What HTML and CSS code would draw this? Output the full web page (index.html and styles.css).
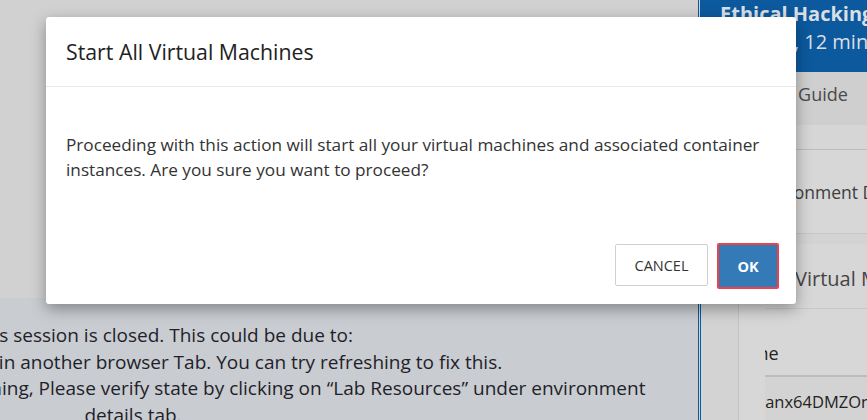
FILE: index.html
```html
<!DOCTYPE html>
<html lang="en">
<head>
<meta charset="utf-8">
<title>Start All Virtual Machines</title>
<link rel="stylesheet" href="styles.css">
</head>
<body>
<div class="page">
  <main class="main">
    <div class="stage"></div>
    <div class="notice">
      <p>The access session is closed. This could be due to:<br>1. The Lab is already open in another browser Tab. You can try refreshing to fix this.<br>2. If your Virtual Machines are still not running, Please verify state by clicking on “Lab Resources” under environment<br>details tab.</p>
    </div>
  </main>
  <aside class="side">
    <div class="side-hdr">
      <div class="course">Ethical Hacking</div>
      <div class="dur">1 hours, 12 mins</div>
    </div>
    <div class="tabs"><span class="tab">Lab Guide</span></div>
    <div class="band"></div>
    <div class="env">Environment Details</div>
    <div class="vmsec">
      <div class="card">
        <div class="card-title">Virtual Machines</div>
        <div class="tbl">
          <div class="th"><span class="th-txt">Machine</span></div>
          <div class="td"><span class="td-txt">Windowsanx64DMZOne</span></div>
        </div>
      </div>
    </div>
  </aside>

  <div class="overlay">
    <div class="modal" role="dialog">
      <div class="modal-hdr"><h4 class="modal-title">Start All Virtual Machines</h4></div>
      <div class="modal-body">
        <p>Proceeding with this action will start all your virtual machines and associated container<br>instances. Are you sure you want to proceed?</p>
      </div>
      <div class="modal-ftr">
        <button class="btn btn-cancel">CANCEL</button>
        <button class="btn btn-ok">OK</button>
      </div>
    </div>
  </div>
</div>
</body>
</html>
```

FILE: styles.css
```css
* { box-sizing: border-box; }
body {
  margin: 0;
  font-family: "Open Sans", "Noto Sans", sans-serif;
  background: #d1d1d1;
}
.page {
  position: relative;
  display: flex;
  width: 867px;
  height: 420px;
  overflow: hidden;
}
.main {
  flex: none;
  width: 698px;
  display: flex;
  flex-direction: column;
  overflow: hidden;
}
.stage {
  flex: none;
  height: 298px;
  background: #d1d1d1;
}
.notice {
  flex: 1;
  background: #c9ccd1;
  padding-top: 24px;
  color: #1f1f2a;
}
.notice p {
  margin: 0 0 0 -467px;
  width: 1200px;
  text-align: center;
  white-space: nowrap;
  font-size: 19px;
  line-height: 26.5px;
}

.side {
  flex: 1;
  display: flex;
  flex-direction: column;
  border-left: 3px double #0c599e;
  background: #d3d3d3;
  overflow: hidden;
  white-space: nowrap;
}
.side-hdr {
  flex: none;
  height: 72px;
  background: #0c599e;
  color: #dadfe5;
  padding: 0 0 0 19px;
  font-size: 20px;
}
.course {
  font-weight: 700;
  line-height: 24px;
  margin-top: 2px;
}
.dur {
  line-height: 28px;
  margin: 2px 0 0 3px;
}
.tabs {
  flex: none;
  height: 53px;
  background: #cfcfcf;
  display: flex;
  align-items: center;
  padding: 0 0 10px 62px;
  font-size: 18px;
  color: #4a4a4a;
}
.band {
  flex: none;
  height: 25px;
  background: #d6d6d6;
  border-bottom: 1px solid #bcbcbc;
}
.env {
  flex: none;
  height: 84px;
  display: flex;
  align-items: center;
  padding-left: 52px;
  font-size: 17.5px;
  color: #3d3d3d;
  border-bottom: 1px solid #c7c7c7;
  background: #d7d7d7;
}
.vmsec {
  flex: 1;
  padding-left: 37px;
  padding-top: 10px;
  background: #d3d3d3;
}
.card {
  height: 100%;
  border-left: 1px solid #c3c3c3;
  background: #d7d7d7;
  padding-left: 26px;
}
.card-title {
  height: 65px;
  display: flex;
  align-items: center;
  padding-left: 30px;
  padding-top: 4px;
  font-size: 20px;
  color: #444;
  border-bottom: 1px solid #c8c8c8;
}
.tbl {
  overflow: hidden;
  font-size: 18px;
  color: #222;
}
.th {
  height: 68px;
  display: flex;
  align-items: flex-end;
  padding-bottom: 10px;
  border-bottom: 2px solid #bdbdbd;
}
.th-txt { margin-left: -58px; }
.td {
  height: 48px;
  display: flex;
  align-items: center;
  background: #d3d3d3;
  font-size: 16.5px;
}
.td-txt { margin-left: -70px; }

.overlay {
  position: absolute;
  inset: 0;
}
.modal {
  position: absolute;
  left: 46px;
  top: 17px;
  width: 750px;
  height: 287px;
  background: #fff;
  border-radius: 3px;
  box-shadow: 0 5px 15px rgba(0, 0, 0, 0.35);
  display: flex;
  flex-direction: column;
  color: #333;
}
.modal-hdr {
  flex: none;
  height: 70px;
  padding: 0 20px;
  display: flex;
  align-items: center;
  border-bottom: 1px solid #e8e8e8;
}
.modal-title {
  margin: 0;
  font-size: 21.3px;
  font-weight: 400;
  color: #222;
}
.modal-body {
  flex: none;
  padding: 45px 20px 0;
}
.modal-body p {
  margin: 0;
  font-size: 17.2px;
  line-height: 25px;
}
.modal-ftr {
  flex: 1;
  display: flex;
  justify-content: flex-end;
  align-items: flex-end;
  gap: 9px;
  padding: 0 17px 15px;
}
.btn {
  font-family: inherit;
  font-size: 14.5px;
  border-radius: 2px;
  cursor: pointer;
}
.btn-cancel {
  width: 93px;
  height: 42px;
  margin-bottom: 3px;
  background: #fff;
  color: #333;
  border: 1px solid #d0d0d0;
  font-weight: 500;
}
.btn-ok {
  width: 62px;
  height: 46px;
  background: #337ab7;
  color: #fff;
  border: 2px solid #f0414b;
  font-weight: 700;
}
```
